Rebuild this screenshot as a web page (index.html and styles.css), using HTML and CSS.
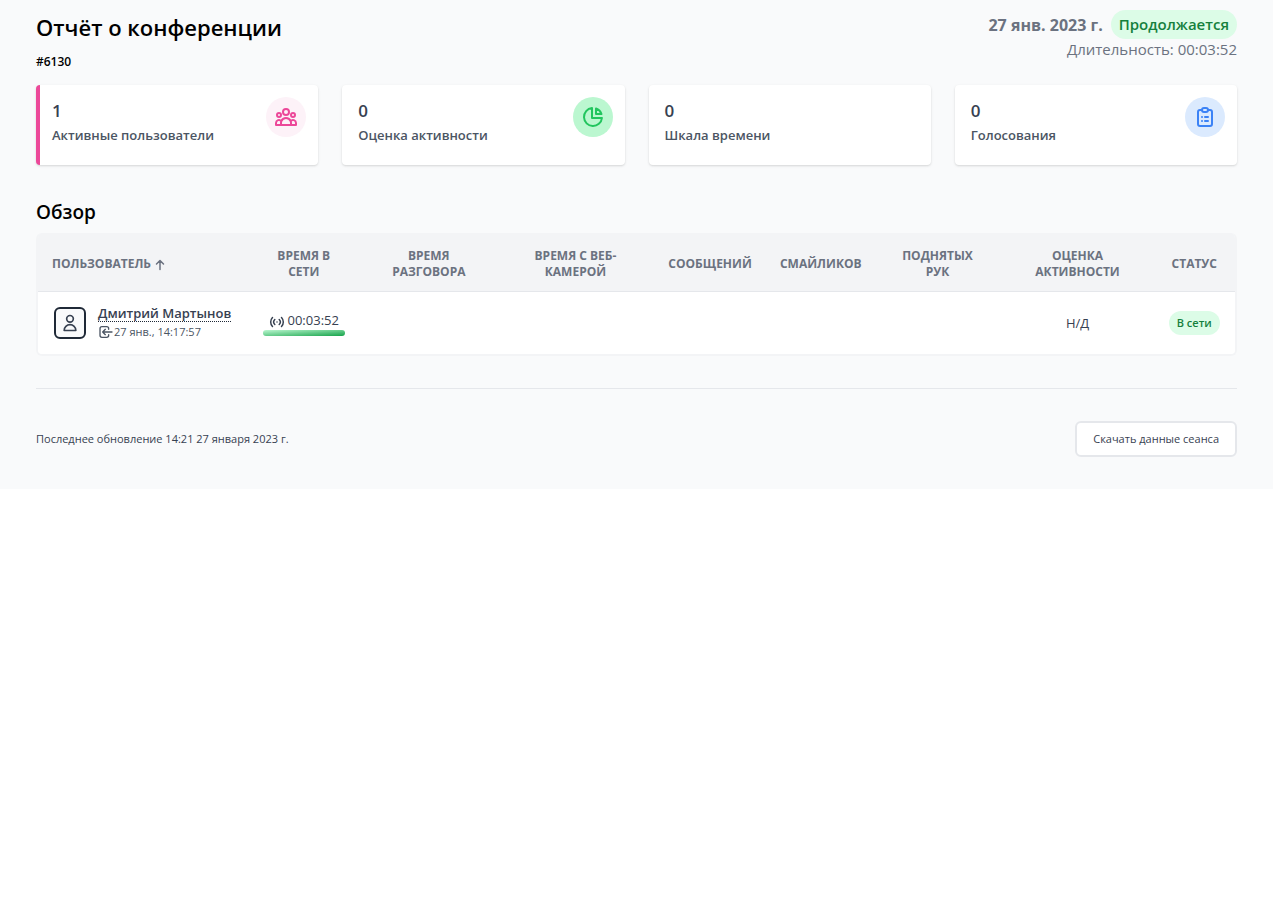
FILE: index.html
```html
<!DOCTYPE html>
<html lang="ru">
<head>
<meta charset="utf-8">
<meta name="viewport" content="width=device-width, initial-scale=1">
<title>Отчёт о конференции</title>
<link rel="stylesheet" href="styles.css">
</head>
<body>
<main class="page">
  <header class="page-header">
    <div>
      <h1 class="title">Отчёт о конференции</h1>
      <p class="meeting-id">#6130</p>
    </div>
    <div class="meeting-info">
      <p class="meeting-date"><time datetime="2023-01-27">27 янв. 2023 г.</time><span class="badge badge-large">Продолжается</span></p>
      <p class="duration">Длительность: 00:03:52</p>
    </div>
  </header>

  <section class="cards">
    <button type="button" class="card card-active">
      <span class="card-text"><span class="card-value">1</span><span class="card-label">Активные пользователи</span></span>
      <span class="card-icon pink"><svg class="icon-24" viewBox="0 0 24 24"><path d="M17 20h5v-2a3 3 0 00-5.356-1.857M17 20H7m10 0v-2c0-.656-.126-1.283-.356-1.857M7 20H2v-2a3 3 0 015.356-1.857M7 20v-2c0-.656.126-1.283.356-1.857m0 0a5.002 5.002 0 019.288 0M15 7a3 3 0 11-6 0 3 3 0 016 0zm6 3a2 2 0 11-4 0 2 2 0 014 0zM7 10a2 2 0 11-4 0 2 2 0 014 0z"/></svg></span>
    </button>
    <button type="button" class="card">
      <span class="card-text"><span class="card-value">0</span><span class="card-label">Оценка активности</span></span>
      <span class="card-icon green"><svg class="icon-24" viewBox="0 0 24 24"><path d="M11 3.055A9.001 9.001 0 1020.945 13H11V3.055z"/><path d="M20.488 9H15V3.512A9.025 9.025 0 0120.488 9z"/></svg></span>
    </button>
    <button type="button" class="card">
      <span class="card-text"><span class="card-value">0</span><span class="card-label">Шкала времени</span></span>
    </button>
    <button type="button" class="card">
      <span class="card-text"><span class="card-value">0</span><span class="card-label">Голосования</span></span>
      <span class="card-icon blue"><svg class="icon-24" viewBox="0 0 24 24"><path d="M9 5H7a2 2 0 00-2 2v12a2 2 0 002 2h10a2 2 0 002-2V7a2 2 0 00-2-2h-2M9 5a2 2 0 002 2h2a2 2 0 002-2M9 5a2 2 0 012-2h2a2 2 0 012 2m-3 7h3m-3 4h3m-6-4h.01M9 16h.01"/></svg></span>
    </button>
  </section>

  <h2 class="section-title">Обзор</h2>
  <div class="table-wrap">
    <table class="users">
      <colgroup>
        <col class="col-user"><col class="col-online"><col class="col-talk"><col class="col-webcam"><col class="col-messages"><col class="col-emojis"><col class="col-hands"><col class="col-score"><col class="col-status">
      </colgroup>
      <thead>
        <tr>
          <th scope="col" class="user-cell">Пользователь <svg class="icon-12" viewBox="0 0 24 24"><path d="M5 10l7-7m0 0l7 7m-7-7v18"/></svg></th>
          <th scope="col">Время в<br>сети</th>
          <th scope="col">Время<br>разговора</th>
          <th scope="col">Время с веб-<br>камерой</th>
          <th scope="col">Сообщений</th>
          <th scope="col">Смайликов</th>
          <th scope="col">Поднятых<br>рук</th>
          <th scope="col">Оценка<br>активности</th>
          <th scope="col">Статус</th>
        </tr>
      </thead>
      <tbody>
        <tr>
          <td class="user-cell">
            <div class="user">
              <span class="avatar"><svg class="icon-20" viewBox="0 0 24 24"><path d="M16 7a4 4 0 11-8 0 4 4 0 018 0zM12 14a7 7 0 00-7 7h14a7 7 0 00-7-7z"/></svg></span>
              <div>
                <button type="button" class="user-name">Дмитрий Мартынов</button>
                <p class="joined"><svg class="icon-16" viewBox="0 0 24 24"><path d="M11 16l-4-4m0 0l4-4m-4 4h14m-5 4v1a3 3 0 01-3 3H6a3 3 0 01-3-3V7a3 3 0 013-3h7a3 3 0 013 3v1"/></svg><time datetime="2023-01-27T14:17:57">27 янв., 14:17:57</time></p>
              </div>
            </div>
          </td>
          <td>
            <div class="online"><svg class="icon-signal" viewBox="0 0 16 12"><path d="M3.500 1.500a6.500 6.500 0 000 9M5.800 3.500a3.600 3.600 0 000 5M10.200 3.500a3.600 3.600 0 010 5M12.500 1.500a6.500 6.500 0 010 9M8 6h.010"/></svg><span>00:03:52</span></div>
            <div class="bar"></div>
          </td>
          <td></td>
          <td></td>
          <td></td>
          <td></td>
          <td></td>
          <td>Н/Д</td>
          <td><span class="badge badge-small">В сети</span></td>
        </tr>
      </tbody>
    </table>
  </div>

  <hr class="divider">
  <footer class="page-footer">
    <p>Последнее обновление 14:21 27 января 2023 г.</p>
    <button type="button" class="download">Скачать данные сеанса</button>
  </footer>
</main>
</body>
</html>
```

FILE: styles.css
```css
* {
  box-sizing: border-box;
}

body,
h1,
h2,
p {
  margin: 0;
}

body {
  background: #fff;
  color: #000;
  font-family: "Open Sans", "Noto Sans", sans-serif;
  font-size: 16px;
  line-height: 24px;
}

button {
  font: inherit;
  color: inherit;
  cursor: pointer;
}

svg {
  flex: none;
  fill: none;
  stroke: currentColor;
  stroke-width: 2;
  stroke-linecap: round;
  stroke-linejoin: round;
}

.icon-12 { width: 12px; height: 12px; stroke-width: 3; vertical-align: -3px; }
.icon-16 { width: 16px; height: 16px; }
.icon-20 { width: 20px; height: 20px; }
.icon-24 { width: 24px; height: 24px; }
.icon-signal { width: 16px; height: 12px; margin-top: 3px; stroke-width: 1.5; }

.page {
  padding: 10px 36px 32px;
  background: #f9fafb;
}

.page-header {
  display: flex;
  justify-content: space-between;
  align-items: flex-start;
  margin-bottom: 13px;
}

.title {
  font-size: 22px;
  line-height: 34px;
  font-weight: 600;
}

.meeting-id {
  margin-top: 8px;
  font-size: 12px;
  line-height: 20px;
  font-weight: 600;
}

.meeting-info {
  text-align: right;
  color: #6b7280;
  font-size: 15px;
}

.meeting-date {
  display: flex;
  justify-content: flex-end;
  align-items: center;
  gap: 8px;
  font-size: 16px;
  font-weight: 700;
}

.duration {
  line-height: 20px;
}

.badge {
  display: inline-block;
  border-radius: 16px;
  background: #dcfce7;
  color: #15803d;
  padding: 4px 8px;
  font-weight: 600;
}

.badge-large {
  font-size: 15px;
  line-height: 21px;
}

.badge-small {
  font-size: 11px;
  line-height: 16px;
}

.cards {
  display: grid;
  grid-template-columns: repeat(4, 1fr);
  gap: 24px;
}

.card {
  display: flex;
  justify-content: space-between;
  align-items: flex-start;
  min-height: 80px;
  padding: 12px 12px 12px 16px;
  border: 0;
  border-radius: 4px;
  background: #fff;
  box-shadow: 0 1px 3px rgba(0, 0, 0, 0.1), 0 1px 2px rgba(0, 0, 0, 0.06);
  text-align: left;
}

.card-active {
  padding-left: 12px;
  border-left: 4px solid #ec4899;
}

.card-text {
  display: flex;
  flex-direction: column;
}

.card-value {
  color: #374151;
  font-size: 17px;
  line-height: 28px;
  font-weight: 600;
}

.card-label {
  color: #4b5563;
  font-size: 13px;
  line-height: 20px;
  font-weight: 600;
}

.card-icon {
  display: flex;
  padding: 8px;
  border-radius: 50%;
}

.pink { color: #ec4899; background: #fdf2f8; }
.green { color: #22c55e; background: #bbf7d0; }
.blue { color: #3b82f6; background: #dbeafe; }

.section-title {
  margin: 33px 0 7px;
  font-size: 19px;
  line-height: 28px;
  font-weight: 600;
}

.table-wrap {
  overflow: hidden;
  border: 2px solid #f3f4f6;
  border-top-width: 0;
  border-radius: 6px;
}

.users {
  width: 100%;
  table-layout: fixed;
  border-collapse: collapse;
  text-align: center;
}

.col-user { width: 17.6%; }
.col-online { width: 9.2%; }
.col-talk { width: 11.7%; }
.col-webcam { width: 12.8%; }
.col-messages { width: 9.7%; }
.col-emojis { width: 8.8%; }
.col-hands { width: 10.7%; }
.col-score { width: 12.7%; }
.col-status { width: 6.8%; }

.users th {
  padding: 15px 0 11px;
  border-bottom: 1px solid #e5e7eb;
  background: #f3f4f6;
  color: #6b7280;
  font-size: 12px;
  line-height: 16px;
  font-weight: 700;
  text-transform: uppercase;
}

.users td {
  padding: 14px;
  background: #fff;
  color: #374151;
  font-size: 13px;
  line-height: 20px;
}

.users td:last-child {
  padding: 14px 0;
}

.users .user-cell {
  padding-left: 14px;
  padding-right: 0;
  text-align: left;
}

.user {
  display: flex;
  align-items: center;
  gap: 12px;
  padding-left: 2px;
}

.avatar {
  display: flex;
  padding: 6px;
  border: 2px solid #1f2937;
  border-radius: 6px;
  background: #f9fafb;
  color: #374151;
}

.avatar .icon-20 {
  margin: -2px;
}

.user-name {
  display: block;
  padding: 0;
  border: 0;
  border-bottom: 1px dotted #1f2937;
  background: none;
  font-size: 13px;
  line-height: 15px;
  font-weight: 600;
}

.joined {
  display: flex;
  align-items: center;
  padding-top: 2px;
  color: #4b5563;
  font-size: 11px;
  line-height: 16px;
}

.online {
  display: flex;
  justify-content: center;
  align-items: center;
  gap: 3px;
}

.bar {
  height: 6px;
  border-radius: 4px;
  background: linear-gradient(to bottom right, #bbf7d0, #16a34a);
}

.divider {
  height: 1px;
  margin: 32px 0;
  border: 0;
  background: #e5e7eb;
}

.page-footer {
  display: flex;
  justify-content: space-between;
  align-items: center;
  color: #374151;
  font-size: 11px;
  line-height: 16px;
}

.download {
  padding: 8px 16px;
  border: 2px solid #e5e7eb;
  border-radius: 6px;
  background: #fff;
}
```
